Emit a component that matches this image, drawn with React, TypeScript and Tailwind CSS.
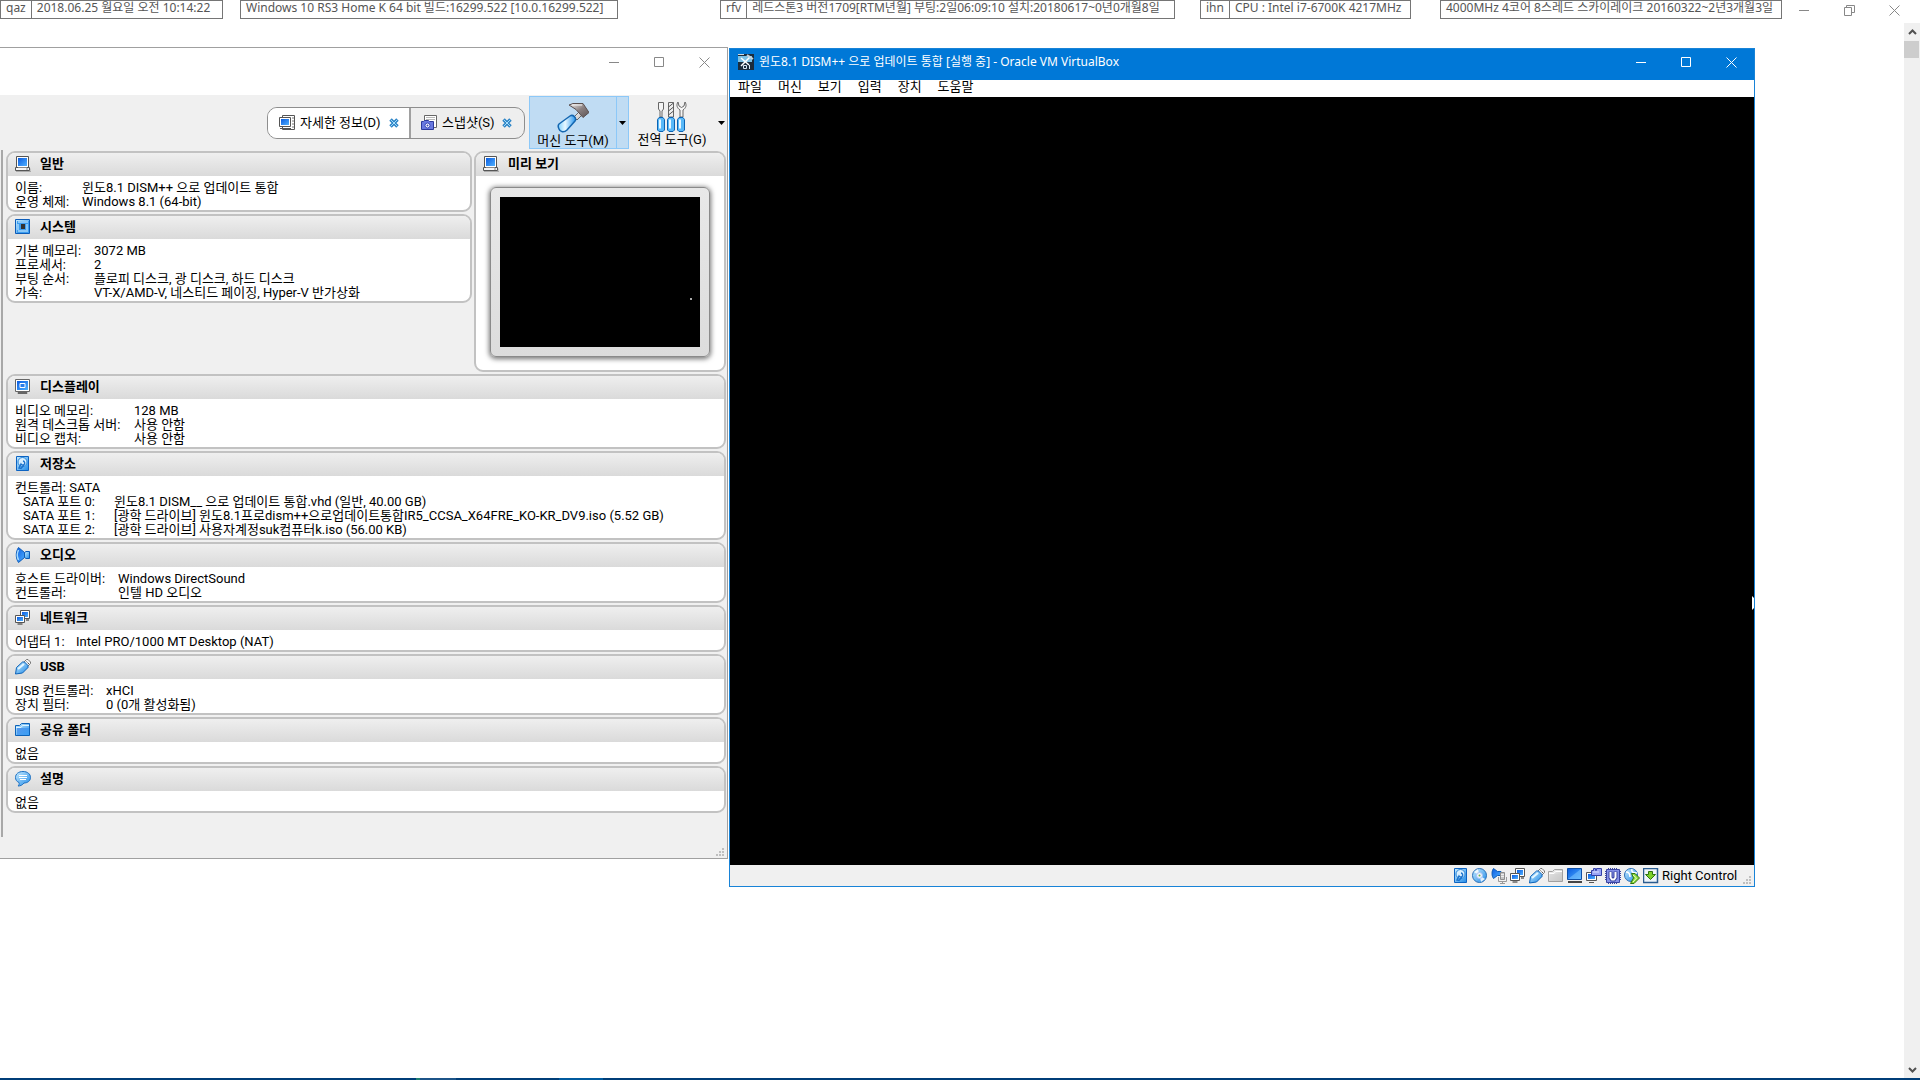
import React from 'react'

type IconProps = { children: React.ReactNode; size?: number }

const Icon = ({ children, size = 16 }: IconProps) => (
  <svg
    width={size}
    height={size}
    viewBox={`0 0 ${size} ${size}`}
    className="block shrink-0"
    aria-hidden="true"
  >
    {children}
  </svg>
)

// shared gradients, referenced by id from every icon
const IconDefs = () => (
  <svg width="0" height="0" className="absolute" aria-hidden="true">
    <defs>
      <linearGradient id="blue" x1="0" y1="0" x2="1" y2="1">
        <stop offset="0" stopColor="#0a5be0" />
        <stop offset="1" stopColor="#4fb0ff" />
      </linearGradient>
      <linearGradient id="sky" x1="0" y1="0" x2="1" y2="1">
        <stop offset="0" stopColor="#c8ecff" />
        <stop offset="1" stopColor="#1f8ae8" />
      </linearGradient>
      <linearGradient id="handle" x1="0" y1="0" x2="1" y2="0">
        <stop offset="0" stopColor="#7fd0ff" />
        <stop offset="0.4" stopColor="#e8f8ff" />
        <stop offset="1" stopColor="#2a98f0" />
      </linearGradient>
      <linearGradient id="steel" x1="0" y1="0" x2="1" y2="1">
        <stop offset="0" stopColor="#f2f2f2" />
        <stop offset="0.5" stopColor="#8a8080" />
        <stop offset="1" stopColor="#5c5252" />
      </linearGradient>
      <linearGradient id="gray" x1="0" y1="0" x2="1" y2="1">
        <stop offset="0" stopColor="#f6f6f6" />
        <stop offset="1" stopColor="#bdbdbd" />
      </linearGradient>
    </defs>
  </svg>
)

const MachineIcon = () => (
  <Icon>
    <path d="M1.5 .5h12v11h-12z" fill="#fff" stroke="#555" />
    <path d="M3 2h9v8H3z" fill="url(#blue)" />
    <path d="M.5 11.5h14v3H.5z" fill="#f4f4f4" stroke="#555" />
    <path d="M3 11.5h9M11 13h2" stroke="#888" />
    <path d="M1 15.5h15v-3" fill="none" stroke="#aaa" />
  </Icon>
)

const ChipIcon = () => (
  <Icon>
    <path d="M.5 .5h14v14H.5z" fill="url(#sky)" stroke="#0c5cb8" />
    <path d="M2 2h12v12H2z" fill="#3c9df0" />
    <path d="M6 5h4v5H6z" fill="#333" />
    <path
      d="M4 2v3M6 2v2M8 2v2M10 2v2M12 2v3M4 13v-2M6 13v-2M8 13v-2M10 13v-2M12 13v-2M2 6h3M2 8h3M2 10h3M13 6h-2M13 8h-2M13 10h-2"
      stroke="#d8f2ff"
      strokeDasharray="2 1"
    />
  </Icon>
)

const DisplayIcon = () => (
  <Icon>
    <path d="M.5 .5h14v12H.5z" fill="#fff" stroke="#666" />
    <path d="M2 2h11v9H2z" fill="url(#blue)" />
    <path d="M5 4.5h5v4H5z" fill="#2b7de9" stroke="#fff" />
    <path d="M3 13.5h9v1H3z" fill="#eee" stroke="#666" />
  </Icon>
)

const DiskIcon = () => (
  <Icon>
    <path d="M1.5 .5h12v14h-12z" fill="url(#sky)" stroke="#0c63c2" />
    <circle cx="7.5" cy="6" r="4.5" fill="#d8efff" stroke="#2a86da" />
    <path d="M8 5a2 2 0 1 1-2 3l-2 4 2 .5L9 9" fill="none" stroke="#1a72cc" strokeWidth="1.4" />
  </Icon>
)

const AudioIcon = () => (
  <Icon>
    <path d="M9.5 5.5l1.5-1h3.5v7H11l-1.500-1z" fill="url(#sky)" stroke="#0c5cb8" />
    <path d="M3.500 .5l6 5v5l-6 5C.5 11 .5 5 3.500 .5z" fill="url(#blue)" stroke="#0c5cb8" />
    <path d="M3.500 3c-1.500 3-1.500 7 0 10" fill="none" stroke="#a8dcff" strokeWidth="1.500" />
  </Icon>
)

const NetworkIcon = () => (
  <Icon>
    <path d="M5.500 .5h9v8h-9z" fill="#fff" stroke="#555" />
    <path d="M7 2h6v5H7z" fill="url(#blue)" />
    <path d="M.5 5.500h9v7h-9z" fill="#fff" stroke="#555" />
    <path d="M2 7h6v4H2z" fill="url(#blue)" />
    <path d="M2.500 14h5M11 10h3" stroke="#666" strokeWidth="1.500" />
  </Icon>
)

const UsbIcon = () => (
  <Icon>
    <path d="M8.500 3.500l3-3h1.500l2.500 2.500v1.500l-3 3z" fill="#f4f4f4" stroke="#777" />
    <path d="M11.500 2.500l1 1M13 4l1 1" stroke="#555" />
    <path d="M.5 15l1-6.500 6-5.500h2l3.500 3.500v2L7.500 14z" fill="url(#sky)" stroke="#0c62b8" />
    <path d="M3 10l6-5" stroke="#e4f6ff" strokeWidth="2" />
  </Icon>
)

const FolderIcon = ({ muted }: { muted?: boolean }) => (
  <Icon>
    <path
      d="M.5 3.500h4l2-2h8v12H.5z"
      fill={muted ? 'url(#gray)' : 'url(#sky)'}
      stroke={muted ? '#a0a0a0' : '#0c62b8'}
    />
    <path d="M1 5.500h5l1.500-2H14" fill="none" stroke={muted ? '#fff' : '#dff4ff'} />
    <path d="M2 6h12v7H2z" fill={muted ? '#d0d0d0' : 'url(#blue)'} opacity=".5" />
  </Icon>
)

const BalloonIcon = () => (
  <Icon>
    <path
      d="M8 .5c4.500 0 7.500 2.500 7.500 6S12.500 12 9 12c-1.500 2-3.500 3-6 3 1-1 1.500-2 1-3.500C1.500 10.500.5 8.500.5 6.500c0-3.500 3-6 7.500-6z"
      fill="url(#sky)"
      stroke="#1c6fc0"
    />
    <path d="M4 4.500h8M4 6.500h8M5 8.500h6" stroke="#fff" />
  </Icon>
)

const DetailsIcon = () => (
  <Icon>
    <path d="M3.500 .5h12v14h-12z" fill="#fff" stroke="#555" />
    <path d="M13 3h2M13 6h2M13 9h2M13 12h2" stroke="#777" />
    <path d="M.5 2.500h11v9H.5z" fill="#fff" stroke="#555" />
    <path d="M2 4h8v6H2z" fill="url(#blue)" />
    <path d="M1 13.500h11" stroke="#555" />
  </Icon>
)

const SnapshotIcon = () => (
  <Icon>
    <path d="M3.500 .5h12v12h-12z" fill="#fff" stroke="#666" />
    <path d="M5 2.500h9M5 4.500h9" stroke="#b8b8b8" />
    <path d="M.5 6.500h2l1-1h4l1 1h4v8H.5z" fill="#6878e0" stroke="#2c3a9c" />
    <circle cx="6.500" cy="10.500" r="2.500" fill="#fff" stroke="#3646b8" />
    <circle cx="6.500" cy="10.500" r="1" fill="#3646b8" />
  </Icon>
)

const CdIcon = () => (
  <Icon>
    <circle cx="7.500" cy="7.500" r="7" fill="url(#sky)" stroke="#2a6fb8" />
    <path d="M7.500 7.500L2 4l4-3z" fill="#fff" opacity=".85" />
    <path d="M7.500 7.500l5.500 3.500-4 3z" fill="#fff" opacity=".85" />
    <circle cx="7.500" cy="7.500" r="3" fill="#eef4ff" stroke="#a8c0f0" />
    <circle cx="7.500" cy="7.500" r="1" fill="#68b048" />
  </Icon>
)

const AudioMicIcon = () => (
  <Icon>
    <path d="M2.500 .5l4 3H10v4H6.500l-4 3C.5 8 .5 3 2.500 .5z" fill="url(#blue)" stroke="#0c5cb8" />
    <path d="M9.500 4.500h4v7h-4z" fill="#c4c4c4" stroke="#8c8c8c" />
    <path d="M10 6.500h3M10 8.500h3" stroke="#eee" />
    <path d="M7.500 9v4.500h8V9M11.500 13v2M9 15.500h5" fill="none" stroke="#999" />
  </Icon>
)

const ScreenIcon = () => (
  <Icon>
    <path d="M.5 .5h14v11H.5z" fill="url(#blue)" stroke="#0c4fa8" />
    <path d="M1 11L14 1v10z" fill="#7cc4ff" opacity=".55" />
    <path d="M1 14h14" stroke="#444" strokeWidth="2" />
  </Icon>
)

const CaptureIcon = () => (
  <Icon>
    <path d="M.5 4.500h10v8H.5z" fill="#fff" stroke="#555" />
    <path d="M2 6h7v5H2z" fill="url(#blue)" />
    <path d="M3 14.500h5" stroke="#555" />
    <path d="M5.500 2.500h2v-2h2v2h1v-2h5v7h-10z" fill="#98a4f4" stroke="#3440a8" />
    <path d="M7 4h6" stroke="#dce0ff" />
  </Icon>
)

const CpuIcon = () => (
  <Icon>
    <path d="M3 .5h10M3 15.500h10M.5 3v10M15.500 3v10" stroke="#3a44a0" strokeDasharray="1 1" />
    <path d="M1.500 1.500h13v13h-13z" fill="#8490e8" stroke="#3a44a0" />
    <path d="M5.500 3.500v6l1.500 2h2l1.500-2v-6" fill="none" stroke="#3a44a0" strokeWidth="4" />
    <path d="M5.500 4v5.500l1.500 2h2l1.500-2V4" fill="none" stroke="#fff" strokeWidth="2" />
  </Icon>
)

const MouseIcon = () => (
  <Icon>
    <circle cx="7" cy="7" r="6.500" fill="url(#sky)" stroke="#2a6fb8" />
    <path d="M2 4c3 0 4 2 4 5M8 1c-1 3 1 4 5 4" fill="none" stroke="#fff" strokeWidth="1.500" />
    <path d="M7.500 5.500h3.500l4.500 4.500-5.500 5.500H6.500l3-5.500z" fill="#8cd838" stroke="#2e7410" />
    <path d="M9 7l3.500 3-3.500 4" fill="none" stroke="#e8ffd0" />
  </Icon>
)

const HostKeyIcon = () => (
  <Icon>
    <path d="M.5 .5h14v14H.5z" fill="#eef4fa" stroke="#2a5c90" strokeWidth="1.500" />
    <path d="M5.500 3.500h4v3h3l-5 5-5-5h3z" fill="#7cd028" stroke="#2e7410" />
  </Icon>
)

const VmIcon = () => (
  <Icon>
    <path d="M0 0h16v16H0z" fill="#1c2c3c" />
    <path d="M0 2h14v6H0z" fill="#7cc0e4" />
    <path d="M0 .5h6" stroke="#d0d8e0" />
    <path d="M3 4l8 7M12 3L3 12" stroke="#fff" strokeWidth="1.500" />
    <path d="M9 1l6 4" stroke="#c8d4dc" strokeWidth="2" />
    <path d="M5.500 11.500h3v3h-3zM11.500 11v4" fill="none" stroke="#d8e8f4" />
  </Icon>
)

const HammerIcon = () => (
  <Icon size={32}>
    <path d="M17 15l5-5 3 3-5 5z" fill="url(#gray)" stroke="#666" />
    <path
      d="M2 22l11-8c3-2 7 2 5 5l-8 9c-3 3-7 2-8-1-1-2-1-4 0-5z"
      fill="url(#handle)"
      stroke="#1466b0"
      strokeWidth="1.500"
    />
    <path d="M12 3l4-1.500h10l6 9-6 5-7-8z" fill="url(#steel)" stroke="#5a5050" />
    <path d="M15 3h10" stroke="#f4f4f4" />
  </Icon>
)

const ToolsIcon = () => (
  <Icon size={32}>
    <path d="M2.500 1.500h5V8L6 10v6H4v-6L2.500 8z" fill="#f4f4f4" stroke="#666" />
    <path d="M12.500 1.500h5V16h-5z" fill="#eee" stroke="#666" />
    <path d="M12.500 6l5-4M12.500 10l5-4M12.500 14l5-4" stroke="#555" />
    <path
      d="M22 1c-2 3-1 6 2 8v7h3V9c3-2 4-5 2-8l-1 4-2.500 1.500L23 5z"
      fill="#f4f4f4"
      stroke="#666"
    />
    <path
      d="M3 16.500h4l1.500 2V29L7 30.500H3L1.500 29V18.500zM13 16.500h4l1.500 2V29L17 30.500h-4L11.500 29V18.500zM23 16.500h4l1.500 2V29L27 30.500h-4L21.500 29V18.500z"
      fill="#58b8f8"
      stroke="#0c64b4"
    />
    <path d="M4 18.500v9M14 18.500v9M24 18.500v9" stroke="#e4f6ff" strokeWidth="2" />
  </Icon>
)

const TabCloseIcon = () => (
  <svg width="10" height="10" viewBox="0 0 10 10" className="block" aria-hidden="true">
    <path d="M1.500 1.500l7 7M8.500 1.500l-7 7" stroke="#2f86c8" strokeWidth="3.500" />
    <path d="M2 2l6 6M8 2L2 8" stroke="#a4dcfa" strokeWidth="1" />
  </svg>
)

const Grip = () => (
  <svg width="9" height="9" viewBox="0 0 9 9" className="block" aria-hidden="true">
    <path d="M6 0h2v2H6zM3 3h2v2H3zM6 3h2v2H6zM0 6h2v2H0zM3 6h2v2H3zM6 6h2v2H6z" fill="#bfbfbf" />
  </svg>
)

const CaptionButtons = ({ restore }: { restore?: boolean }) => (
  <div className="ml-auto flex shrink-0">
    <button aria-label="최소화" className="flex h-5 w-11 items-center justify-center">
      <svg width="11" height="11" viewBox="0 0 11 11">
        <path d="M0 5.500h10" stroke="currentColor" />
      </svg>
    </button>
    <button aria-label="최대화" className="flex h-5 w-[46px] items-center justify-center">
      <svg width="11" height="11" viewBox="0 0 11 11" fill="none" stroke="currentColor">
        {restore ? <path d="M.5 2.500h7v8h-7zM2.500 2.500v-2h8v7h-3" /> : <path d="M.5 .5h9v9h-9z" />}
      </svg>
    </button>
    <button aria-label="닫기" className="flex h-5 w-11 items-center justify-center">
      <svg width="11" height="11" viewBox="0 0 11 11">
        <path d="M.5 .5l10 10M10.500 .5l-10 10" stroke="currentColor" />
      </svg>
    </button>
  </div>
)

type SectionProps = {
  icon: React.ReactNode
  title: string
  children: React.ReactNode
  className?: string
}

const Section = ({ icon, title, children, className = '' }: SectionProps) => (
  <section
    className={`overflow-hidden rounded-[9px] border-2 border-[#c2c2c2] bg-white ${className}`}
  >
    <h2 className="flex h-[23px] items-center gap-[9px] bg-linear-to-b from-[#efefef] to-[#dadada] px-[7px] pb-px font-bold">
      {icon}
      {title}
    </h2>
    {children}
  </section>
)

type Row = [string, string?]

const Details = ({ rows, labelWidth, lead }: { rows: Row[]; labelWidth: string; lead?: string }) => (
  <div className="px-[7px] pt-[5px] pb-px">
    {lead && <p>{lead}</p>}
    <table className={`border-collapse ${lead ? 'ml-2' : ''}`}>
      <tbody>
        {rows.map(([label, value]) => (
          <tr key={label}>
            <th scope="row" className={`p-0 text-left font-normal whitespace-nowrap ${labelWidth}`}>
              {label}
            </th>
            {value && <td className="p-0 whitespace-nowrap">{value}</td>}
          </tr>
        ))}
      </tbody>
    </table>
  </div>
)

const toolbars = [
  { name: 'qaz', text: '2018.06.25 월요일 오전 10:14:22', box: 'w-[223px]' },
  {
    name: '',
    text: 'Windows 10 RS3 Home K 64 bit 빌드:16299.522 [10.0.16299.522]',
    box: 'ml-[17px] w-[378px]',
  },
  {
    name: 'rfv',
    text: '레드스톤3 버전1709[RTM년월] 부팅:2일06:09:10 설치:20180617~0년0개월8일',
    box: 'ml-[102px] w-[455px]',
  },
  { name: 'ihn', text: 'CPU : Intel i7-6700K 4217MHz', box: 'ml-[25px] w-[211px]' },
  {
    name: '',
    text: '4000MHz 4코어 8스레드 스카이레이크 20160322~2년3개월3일',
    box: 'ml-[29px] w-[342px]',
  },
]

const menus = ['파일', '머신', '보기', '입력', '장치', '도움말']

const statusIcons = [
  <DiskIcon />,
  <CdIcon />,
  <AudioMicIcon />,
  <NetworkIcon />,
  <UsbIcon />,
  <FolderIcon muted />,
  <ScreenIcon />,
  <CaptureIcon />,
  <CpuIcon />,
  <MouseIcon />,
  <HostKeyIcon />,
]

const TopStrip = () => (
  <header className="flex h-[23px] items-start pr-1 font-['Noto_Sans','Noto_Sans_CJK_KR',sans-serif] text-[12px] leading-[13px] text-[#555]">
    {toolbars.map((bar) => (
      <div
        key={bar.text}
        className={`flex h-[19px] shrink-0 border border-[#757575] whitespace-nowrap ${bar.box}`}
      >
        {bar.name && <span className="border-r border-[#757575] px-[5px]">{bar.name}</span>}
        <span className="px-[5px]">{bar.text}</span>
      </div>
    ))}
    <div className="ml-auto flex text-[#888]">
      <CaptionButtons restore />
    </div>
  </header>
)

const ManagerWindow = () => (
  <section className="mr-px flex min-w-0 flex-1 flex-col border-y border-r border-[#a0a0a0] bg-[#f0f0f0]">
    <div className="flex h-[47px] bg-white pt-1 pr-px text-[#888]">
      <CaptionButtons />
    </div>

    <div className="flex h-[55px] items-start justify-end pt-px">
      <div className="mt-[11px] mr-1 flex h-8 overflow-hidden rounded-[10px] border border-[#8e8e8e] bg-[#eee]">
        <button className="flex w-[143px] items-center gap-[5px] border-r-2 border-[#a0a0a0] bg-white pl-[11px]">
          <DetailsIcon />
          <span className="w-[84px] text-left whitespace-nowrap">자세한 정보(D)</span>
          <TabCloseIcon />
        </button>
        <button className="flex w-[113px] items-center gap-[5px] pl-[10px]">
          <SnapshotIcon />
          <span className="w-[55px] text-left whitespace-nowrap">스냅샷(S)</span>
          <TabCloseIcon />
        </button>
      </div>
      <div className="flex h-[53px] border border-[#8cc8f8] bg-[#c0dcf3]">
        <button className="flex w-[86px] flex-col items-center pt-[5px] whitespace-nowrap">
          <HammerIcon />
          머신 도구(M)
        </button>
        <button
          aria-label="머신 도구 메뉴"
          className="flex w-3 items-center justify-center border-l border-[#8cc8f8]"
        >
          <svg width="7" height="4" viewBox="0 0 7 4" className="shrink-0">
            <path d="M0 0h7L3.500 4z" />
          </svg>
        </button>
      </div>
      <div className="flex h-[53px]">
        <button className="flex w-[86px] flex-col items-center pt-[5px] whitespace-nowrap">
          <ToolsIcon />
          전역 도구(G)
        </button>
        <button aria-label="전역 도구 메뉴" className="flex w-3 items-center justify-center">
          <svg width="7" height="4" viewBox="0 0 7 4" className="shrink-0">
            <path d="M0 0h7L3.500 4z" />
          </svg>
        </button>
      </div>
    </div>

    <div className="ml-px flex min-h-[687px] flex-col gap-[2px] border-l-2 border-[#a8a8a8] pt-px pr-px pl-[3px]">
      <div className="flex gap-[2px]">
        <div className="flex min-w-0 flex-1 flex-col gap-[2px]">
          <Section icon={<MachineIcon />} title="일반">
            <Details
              labelWidth="w-[67px]"
              rows={[
                ['이름:', '윈도8.1 DISM++ 으로 업데이트 통합'],
                ['운영 체제:', 'Windows 8.1 (64-bit)'],
              ]}
            />
          </Section>
          <Section icon={<ChipIcon />} title="시스템">
            <Details
              labelWidth="w-[79px]"
              rows={[
                ['기본 메모리:', '3072 MB'],
                ['프로세서:', '2'],
                ['부팅 순서:', '플로피 디스크, 광 디스크, 하드 디스크'],
                ['가속:', 'VT-X/AMD-V, 네스티드 페이징, Hyper-V 반가상화'],
              ]}
            />
          </Section>
        </div>
        <Section icon={<MachineIcon />} title="미리 보기" className="h-[221px] w-[252px] shrink-0">
          <div className="mx-auto mt-[11px] w-[220px] rounded-[6px] border border-[#8a8a8a] bg-linear-to-b from-[#e8e8e8] to-[#dcdcdc] p-[9px] shadow-[0_1px_5px_1px_#777]">
            <div className="flex h-[150px] items-end justify-end bg-black pr-2 pb-[47px]">
              <span className="size-[2px] bg-[#aaa]" />
            </div>
          </div>
        </Section>
      </div>
      <Section icon={<DisplayIcon />} title="디스플레이">
        <Details
          labelWidth="w-[119px]"
          rows={[
            ['비디오 메모리:', '128 MB'],
            ['원격 데스크톱 서버:', '사용 안함'],
            ['비디오 캡처:', '사용 안함'],
          ]}
        />
      </Section>
      <Section icon={<DiskIcon />} title="저장소">
        <Details
          lead="컨트롤러: SATA"
          labelWidth="w-[91px]"
          rows={[
            ['SATA 포트 0:', '윈도8.1 DISM__ 으로 업데이트 통합.vhd (일반, 40.00 GB)'],
            [
              'SATA 포트 1:',
              '[광학 드라이브] 윈도8.1프로dism++으로업데이트통합IR5_CCSA_X64FRE_KO-KR_DV9.iso (5.52 GB)',
            ],
            ['SATA 포트 2:', '[광학 드라이브] 사용자계정suk컴퓨터k.iso (56.00 KB)'],
          ]}
        />
      </Section>
      <Section icon={<AudioIcon />} title="오디오">
        <Details
          labelWidth="w-[103px]"
          rows={[
            ['호스트 드라이버:', 'Windows DirectSound'],
            ['컨트롤러:', '인텔 HD 오디오'],
          ]}
        />
      </Section>
      <Section icon={<NetworkIcon />} title="네트워크">
        <Details labelWidth="w-[61px]" rows={[['어댑터 1:', 'Intel PRO/1000 MT Desktop (NAT)']]} />
      </Section>
      <Section icon={<UsbIcon />} title="USB">
        <Details
          labelWidth="w-[91px]"
          rows={[
            ['USB 컨트롤러:', 'xHCI'],
            ['장치 필터:', '0 (0개 활성화됨)'],
          ]}
        />
      </Section>
      <Section icon={<FolderIcon />} title="공유 폴더">
        <Details labelWidth="w-auto" rows={[['없음']]} />
      </Section>
      <Section icon={<BalloonIcon />} title="설명">
        <Details labelWidth="w-auto" rows={[['없음']]} />
      </Section>
    </div>

    <div className="flex h-[21px] items-end justify-end pr-[2px] pb-px">
      <Grip />
    </div>
  </section>
)

const VmWindow = () => (
  <section className="mt-px shrink-0 border border-[#1883d7]">
    <div className="flex h-[31px] items-start bg-[#0078d7] pt-[3px] pr-px pl-2 text-white">
      <div className="flex h-5 items-center gap-[5px] font-['Noto_Sans','Noto_Sans_CJK_KR',sans-serif] text-[12px]">
        <VmIcon />
        <h1>윈도8.1 DISM++ 으로 업데이트 통합 [실행 중] - Oracle VM VirtualBox</h1>
      </div>
      <CaptionButtons />
    </div>
    <nav className="flex h-[17px] items-start bg-white">
      {menus.map((menu) => (
        <button key={menu} className="px-2">
          {menu}
        </button>
      ))}
    </nav>
    <div className="flex h-[768px] w-[1024px] items-end justify-end bg-black pb-[254px]">
      <svg width="3" height="15" viewBox="0 0 3 15" aria-hidden="true">
        <path d="M1 0l2 2v10l-2 2z" fill="#fff" />
      </svg>
    </div>
    <footer className="flex h-[21px] items-center justify-end gap-[3px] bg-[#f0f0f0] pr-[2px]">
      {statusIcons.map((icon, idx) => (
        <span key={idx}>{icon}</span>
      ))}
      <span className="w-[78px] whitespace-nowrap">Right Control</span>
      <div className="self-end pb-px">
        <Grip />
      </div>
    </footer>
  </section>
)

const ScrollBar = () => (
  <aside className="flex w-4 shrink-0 flex-col items-center bg-[#f0f0f0]">
    <button aria-label="위로" className="flex h-[18px] w-full items-center justify-center">
      <svg width="9" height="6" viewBox="0 0 9 6">
        <path d="M1 5l3.500-3.500L8 5" fill="none" stroke="#505050" strokeWidth="2" />
      </svg>
    </button>
    <div className="h-[17px] w-[15px] self-start bg-[#cdcdcd]" />
    <button aria-label="아래로" className="mt-auto flex h-[17px] w-full items-center justify-center">
      <svg width="9" height="6" viewBox="0 0 9 6">
        <path d="M1 1l3.500 3.500L8 1" fill="none" stroke="#505050" strokeWidth="2" />
      </svg>
    </button>
  </aside>
)

const App = () => (
  <div className="flex min-h-screen flex-col bg-white font-['Roboto','Noto_Sans_CJK_KR',sans-serif] text-[13px] leading-[14px] text-black">
    <IconDefs />
    <TopStrip />
    <div className="flex flex-1">
      <main className="flex min-w-0 flex-1 items-start pt-6 pr-[149px]">
        <ManagerWindow />
        <VmWindow />
      </main>
      <ScrollBar />
    </div>
    <footer className="flex h-[2px] bg-[#003e78]">
      <div className="ml-[416px] w-1 bg-[#1f8070]" />
      <div className="w-9 bg-[#1c5488]" />
      <div className="ml-[103px] w-11 bg-[#005a9e]" />
    </footer>
  </div>
)

export default App
